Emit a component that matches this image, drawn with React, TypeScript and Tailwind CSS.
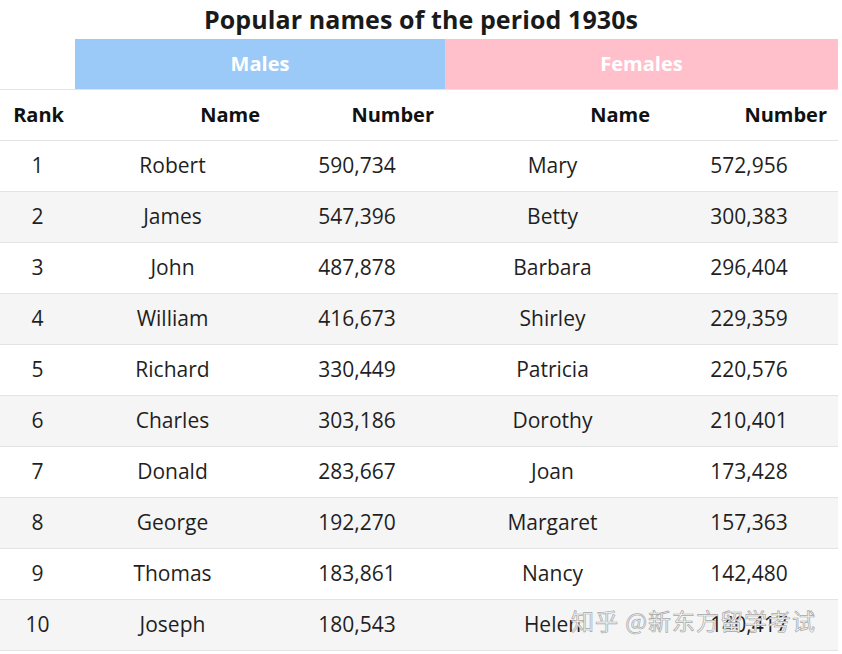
const rows: [number, string, string, string, string][] = [
  [1, 'Robert', '590,734', 'Mary', '572,956'],
  [2, 'James', '547,396', 'Betty', '300,383'],
  [3, 'John', '487,878', 'Barbara', '296,404'],
  [4, 'William', '416,673', 'Shirley', '229,359'],
  [5, 'Richard', '330,449', 'Patricia', '220,576'],
  [6, 'Charles', '303,186', 'Dorothy', '210,401'],
  [7, 'Donald', '283,667', 'Joan', '173,428'],
  [8, 'George', '192,270', 'Margaret', '157,363'],
  [9, 'Thomas', '183,861', 'Nancy', '142,480'],
  [10, 'Joseph', '180,543', 'Helen', '140,417'],
];

const cols = 'grid grid-cols-[75px_195px_175px_215px_178px]';

export default function App() {
  return (
    <div
      className="relative w-[842px] h-[654px] bg-white text-[#1f1f1f] overflow-hidden"
      style={{ fontFamily: '"Open Sans", "Noto Sans", sans-serif' }}
    >
      <h1 className="h-[39px] flex items-center justify-center text-[25px] font-bold text-[#1a1a1a] tracking-[0.1px]">
        Popular names of the period 1930s
      </h1>

      {/* group header */}
      <div className="flex h-[50px] w-[838px]">
        <div className="w-[75px]" />
        <div className="w-[370px] bg-[#9ccaf8] flex items-center justify-center text-white font-bold text-[20px]">
          Males
        </div>
        <div className="w-[393px] bg-[#ffc0cb] flex items-center justify-center text-white font-bold text-[20px]">
          Females
        </div>
      </div>

      {/* column header */}
      <div className={`${cols} w-[838px] h-[52px] border-y border-[#e3e3e3] text-[20px] font-bold text-[#111]`}>
        <div className="flex items-center justify-end pr-[11px]">Rank</div>
        <div className="flex items-center justify-end pr-[10px]">Name</div>
        <div className="flex items-center justify-end pr-[11px]">Number</div>
        <div className="flex items-center justify-end pr-[10px]">Name</div>
        <div className="flex items-center justify-end pr-[11px]">Number</div>
      </div>

      {rows.map(([rank, m, mn, f, fn], i) => (
        <div
          key={rank}
          className={`${cols} w-[838px] h-[51px] border-b border-[#e3e3e3] text-[21px] ${i % 2 === 1 ? 'bg-[#f5f5f5]' : 'bg-white'}`}
        >
          <div className="flex items-center justify-center">{rank}</div>
          <div className="flex items-center justify-center">{m}</div>
          <div className="flex items-center justify-center pr-[1px]">{mn}</div>
          <div className="flex items-center justify-center">{f}</div>
          <div className="flex items-center justify-center">{fn}</div>
        </div>
      ))}

      {/* watermark */}
      <div
        className="absolute left-[571px] top-[603px] text-[23px] text-[#f6f6f6] tracking-[1px] whitespace-nowrap"
        style={{
          fontFamily: '"Noto Sans CJK SC", sans-serif',
          WebkitTextStroke: '0.7px #a8a8a8',
        }}
      >
        知乎 @新东方留学考试
      </div>
    </div>
  );
}
